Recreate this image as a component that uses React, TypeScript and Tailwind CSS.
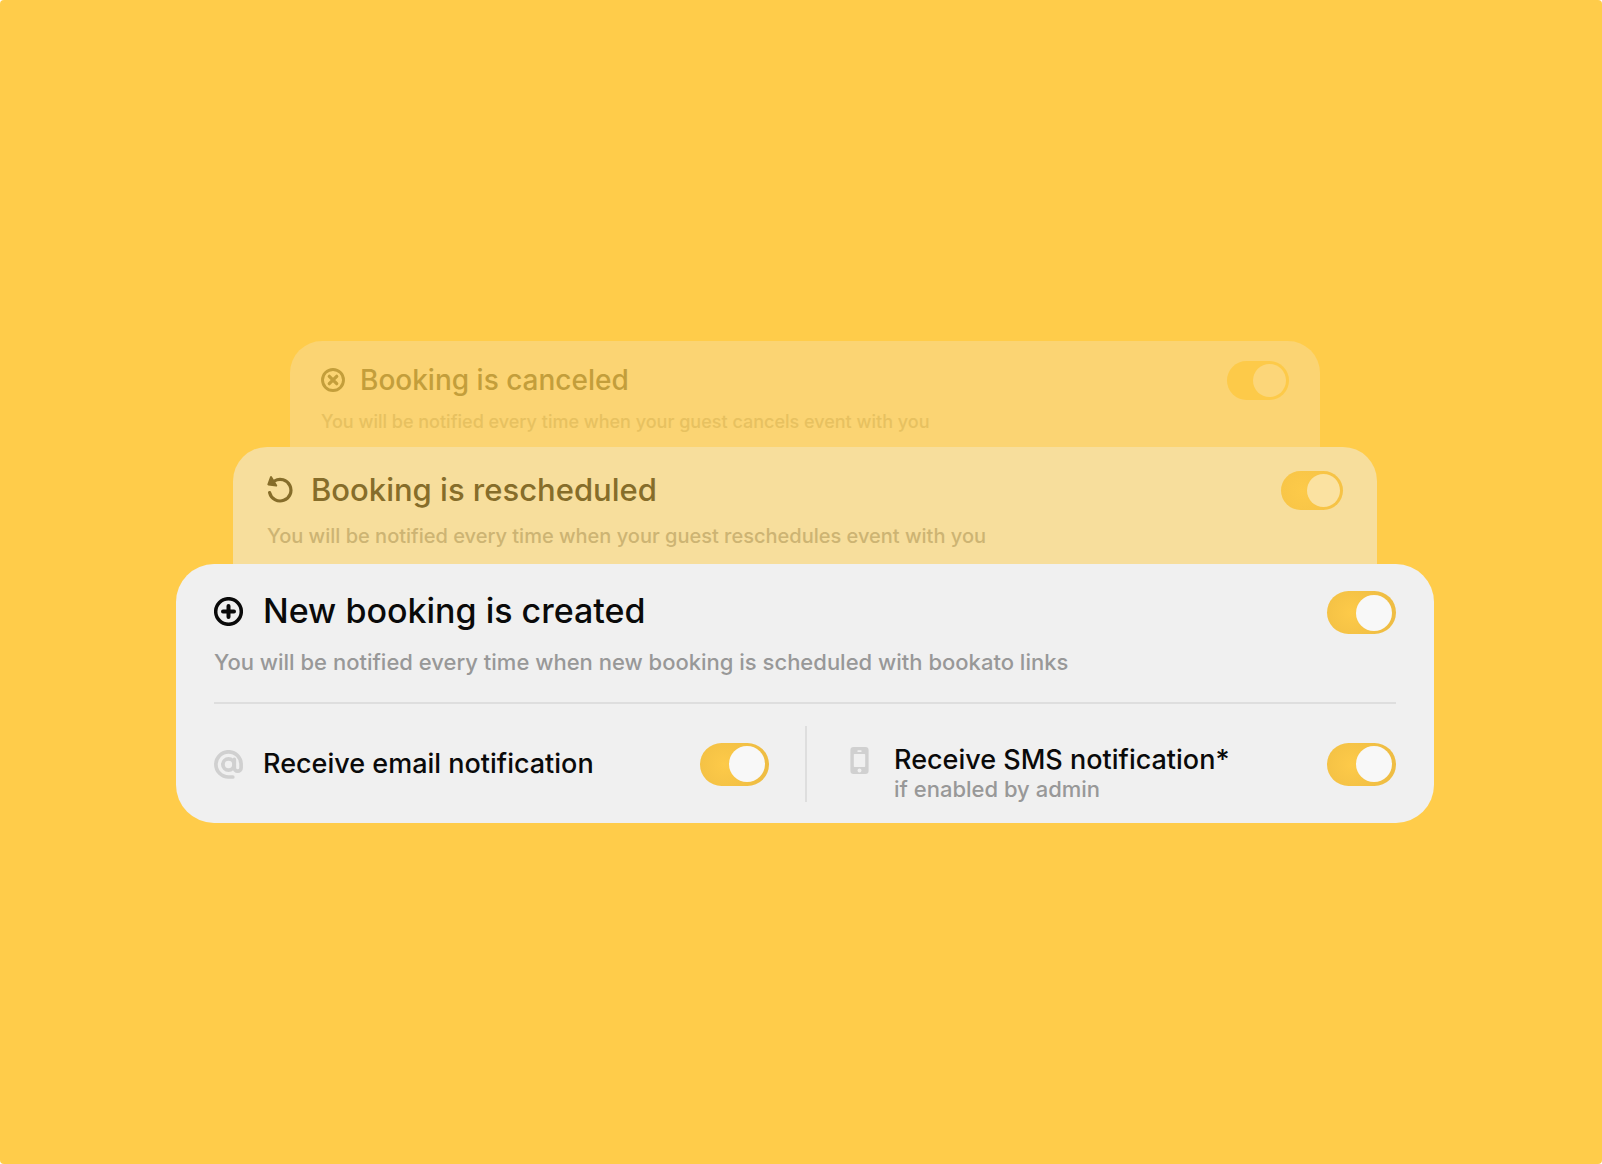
import { ReactNode } from "react";
import clsx from "clsx";

function PlusCircleIcon() {
  return (
    <svg viewBox="0 0 29 29" className="w-[29px] h-[29px] shrink-0" fill="none" stroke="currentColor" aria-hidden="true">
      <circle cx="14.5" cy="14.5" r="12.8" strokeWidth="3.5" />
      <path d="M14.5 9v11M9 14.5h11" strokeWidth="4" strokeLinecap="round" />
    </svg>
  );
}

function CrossCircleIcon() {
  return (
    <svg viewBox="0 0 24 24" className="w-6 h-6 shrink-0" fill="none" stroke="currentColor" aria-hidden="true">
      <circle cx="12" cy="12" r="10.5" strokeWidth="2.9" />
      <path d="M8.3 8.3l7.4 7.4M15.7 8.3l-7.4 7.4" strokeWidth="3.3" strokeLinecap="round" />
    </svg>
  );
}

function RestoreIcon() {
  return (
    <svg viewBox="0 0 26 28" className="w-[26px] h-7 shrink-0" fill="none" stroke="currentColor" aria-hidden="true">
      <path d="M7.4 5A10.8 10.8 0 1 1 2.6 16.6" strokeWidth="3.2" strokeLinecap="round" />
      <path d="M4 1.1L1.4 8.4L9.2 9.5Z" fill="currentColor" strokeWidth="2" strokeLinejoin="round" />
    </svg>
  );
}

function AtIcon() {
  return (
    <svg viewBox="0 0 29 29" className="w-[29px] h-[29px] shrink-0" fill="none" stroke="currentColor" strokeLinecap="round" aria-hidden="true">
      <circle cx="14.5" cy="14.5" r="5.6" strokeWidth="3.8" />
      <path d="M18.8 27H14.5A12.6 12.6 0 1 1 27.1 14.5V17.8a3.4 3.4 0 0 1-6.8 0V9.4" strokeWidth="3.7" />
    </svg>
  );
}

function PhoneIcon() {
  return (
    <svg viewBox="0 0 29 29" className="w-[29px] h-[29px] shrink-0" fill="currentColor" aria-hidden="true">
      <path
        fillRule="evenodd"
        d="M8.6 1h11.8a3.2 3.2 0 0 1 3.2 3.2v20.6a3.2 3.2 0 0 1-3.2 3.2H8.6a3.2 3.2 0 0 1-3.2-3.2V4.2A3.2 3.2 0 0 1 8.6 1zM9.6 8h9.8a.8.8 0 0 1 .8.8v11.4a.8.8 0 0 1-.8.8H9.6a.8.8 0 0 1-.8-.8V8.8a.8.8 0 0 1 .8-.8zM13.2 4.2h2.6a.9.9 0 0 1 0 1.8h-2.6a.9.9 0 0 1 0-1.8zM14.5 22.4a2 2 0 1 1 0 4 2 2 0 0 1 0-4z"
      />
    </svg>
  );
}

function Toggle({ id, className }: { id: string; className?: string }) {
  return (
    <input
      id={id}
      type="checkbox"
      role="switch"
      defaultChecked
      className={clsx(
        "appearance-none shrink-0 flex items-center justify-start checked:justify-end rounded-full cursor-pointer before:block before:rounded-full",
        className
      )}
    />
  );
}

const LARGE_TOGGLE =
  "w-[69px] h-[43px] px-1 bg-radial-[circle_at_35%_50%] from-[#fdca49] to-[#efbd43] to-80% before:w-9 before:h-9 before:bg-[#f8f8f8]";

type BackCardProps = {
  id: string;
  icon: ReactNode;
  title: string;
  text: string;
  className: string;
  labelClass: string;
  textClass: string;
  toggleClass: string;
};

function BackCard({ id, icon, title, text, className, labelClass, textClass, toggleClass }: BackCardProps) {
  return (
    <section className={className}>
      <div className="flex items-start justify-between gap-4">
        <label htmlFor={id} className={clsx("flex items-center", labelClass)}>
          {icon}
          {title}
        </label>
        <Toggle id={id} className={clsx("w-[62px] h-[39px] px-[3px] before:w-[33px] before:h-[33px]", toggleClass)} />
      </div>
      <p className={textClass}>{text}</p>
    </section>
  );
}

export default function App() {
  return (
    <div className="bg-white">
      <main className="min-h-screen rounded-[4px] bg-[#ffcc4a] pl-2 flex flex-col justify-center items-center font-['Inter',sans-serif] font-medium">
        <div className="w-4/5 max-w-[1258px] flex flex-col items-center">
          <BackCard
            id="canceled"
            icon={<CrossCircleIcon />}
            title="Booking is canceled"
            text="You will be notified every time when your guest cancels event with you"
            className="w-[82%] max-w-[1030px] rounded-t-[32px] bg-[#fbd473] px-[31px] pt-5 pb-[13px]"
            labelClass="gap-[15px] text-[28px] leading-[38px] text-[#c39e3b]"
            textClass="mt-[10px] text-[18px] leading-6 text-[#e7c160]"
            toggleClass="bg-[#fdca49] before:bg-[#fcd679]"
          />
          <BackCard
            id="rescheduled"
            icon={<RestoreIcon />}
            title="Booking is rescheduled"
            text="You will be notified every time when your guest reschedules event with you"
            className="w-[91%] max-w-[1144px] rounded-t-[34px] bg-[#f7de9c] px-[34px] pt-6 pb-[14px]"
            labelClass="gap-[18px] text-[31px] leading-[38px] text-[#866d2a]"
            textClass="mt-3 text-[20px] leading-7 text-[#cdb473]"
            toggleClass="bg-radial-[circle_at_35%_50%] from-[#fdca49] to-[#f6c346] to-80% before:bg-[#fbe2a1]"
          />
          <section className="w-full rounded-[38px] bg-[#f0f0f0] px-[38px] pt-[27px] pb-[21px]">
            <div className="flex items-start justify-between gap-4">
              <label htmlFor="created" className="flex items-center gap-5 text-[34px] leading-10 text-[#0a0a0a]">
                <PlusCircleIcon />
                New booking is created
              </label>
              <Toggle id="created" className={LARGE_TOGGLE} />
            </div>
            <p className="mt-3 text-[22px] leading-8 text-[#989898]">
              You will be notified every time when new booking is scheduled with bookato links
            </p>
            <hr className="mt-6 border-t-2 border-[#dedede]" />
            <div className="mt-[22px] grid grid-cols-1 lg:grid-cols-2">
              <div className="flex items-center justify-between pr-9 min-h-[76px]">
                <label htmlFor="email" className="flex items-center gap-5 text-[27px] leading-8 text-[#0a0a0a]">
                  <span className="text-[#d0d0d0]">
                    <AtIcon />
                  </span>
                  Receive email notification
                </label>
                <Toggle id="email" className={LARGE_TOGGLE} />
              </div>
              <div className="flex items-center justify-between pl-[38px] min-h-[76px] border-l-2 border-[#dedede]">
                <div className="flex items-start gap-5 self-end">
                  <span className="text-[#d0d0d0] h-8 flex items-center">
                    <PhoneIcon />
                  </span>
                  <div>
                    <label htmlFor="sms" className="block text-[27px] leading-8 text-[#0a0a0a]">
                      Receive SMS notification*
                    </label>
                    <p className="text-[22px] leading-[26px] text-[#989898]">if enabled by admin</p>
                  </div>
                </div>
                <Toggle id="sms" className={LARGE_TOGGLE} />
              </div>
            </div>
          </section>
        </div>
      </main>
    </div>
  );
}
